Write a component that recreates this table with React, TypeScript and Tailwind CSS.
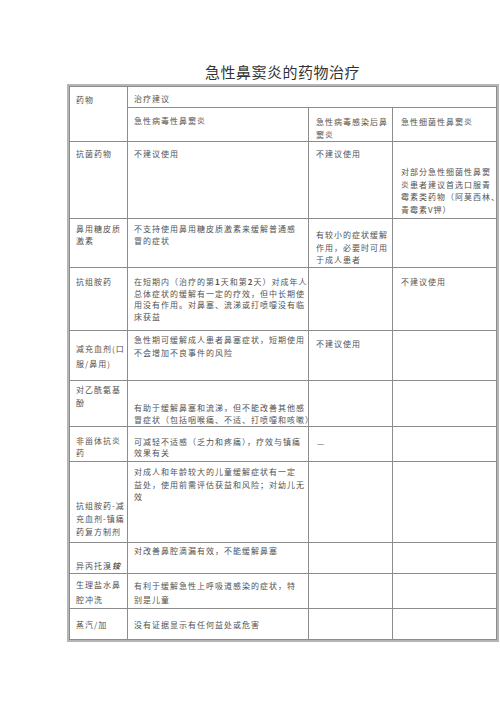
export default function App() {
  const td =
    "align-top border border-[#8c8c8c] p-0 text-[8px] tracking-[1px] text-[#525252] whitespace-nowrap";

  return (
    <div className="min-h-screen bg-white font-['Noto_Sans_CJK_SC','Noto_Sans',sans-serif]">
      <div className="pl-[69px] pt-[62px] w-[496px]">
        {/* 标题 */}
        <h1 className="w-[427px] h-[20px] mb-[4px] text-center text-[15px] leading-[20px] tracking-[0.5px] font-normal text-[#333333]">
          急性鼻窦炎的药物治疗
        </h1>

        <table className="table-fixed border-collapse w-[427px] outline-2 outline-[#b5b5b5]">
          <colgroup>
            <col className="w-[58px]" />
            <col className="w-[181px]" />
            <col className="w-[84px]" />
            <col className="w-[104px]" />
          </colgroup>
          <tbody>
            {/* 表头 */}
            <tr className="h-[21px]">
              <td rowSpan={2} className={`${td} pl-[6px] pt-[7px] leading-[12px]`}>
                药物
              </td>
              <td colSpan={3} className={`${td} pl-[6px] pt-[6px] leading-[12px]`}>
                治疗建议
              </td>
            </tr>
            <tr className="h-[34px]">
              <td className={`${td} pl-[6px] pt-[7px] leading-[12px]`}>急性病毒性鼻窦炎</td>
              <td className={`${td} pl-[7px] pt-[7px] leading-[13px] tracking-[0.9px]`}>
                急性病毒感染后鼻
                <br />
                窦炎
              </td>
              <td className={`${td} pl-[8px] pt-[8px] leading-[12px]`}>急性细菌性鼻窦炎</td>
            </tr>

            {/* 抗菌药物 */}
            <tr className="h-[77px]">
              <td className={`${td} pl-[6px] pt-[6px] leading-[12px]`}>抗菌药物</td>
              <td className={`${td} pl-[6px] pt-[6px] leading-[12px]`}>不建议使用</td>
              <td className={`${td} pl-[7px] pt-[6px] leading-[12px]`}>不建议使用</td>
              <td className={`${td} pl-[8px] pt-[24px] leading-[12.5px] tracking-[0.6px]`}>
                对部分急性细菌性鼻窦
                <br />
                炎患者建议首选口服青
                <br />
                霉素类药物（阿莫西林、
                <br />
                青霉素V钾）
              </td>
            </tr>

            {/* 鼻用糖皮质激素 */}
            <tr className="h-[49px]">
              <td className={`${td} pl-[6px] pt-[4px] leading-[12px]`}>
                鼻用糖皮质
                <br />
                激素
              </td>
              <td className={`${td} pl-[6px] pt-[4px] leading-[12px]`}>
                不支持使用鼻用糖皮质激素来缓解普通感
                <br />
                冒的症状
              </td>
              <td className={`${td} pl-[7px] pt-[10px] leading-[12.5px] tracking-[0.9px]`}>
                有较小的症状缓解
                <br />
                作用，必要时可用
                <br />
                于成人患者
              </td>
              <td className={td}></td>
            </tr>

            {/* 抗组胺药 */}
            <tr className="h-[63px]">
              <td className={`${td} pl-[6px] pt-[8px] leading-[12px]`}>抗组胺药</td>
              <td className={`${td} pl-[6px] pt-[8px] leading-[11.5px] tracking-[0.9px]`}>
                在短期内（治疗的第<b>1</b>天和第<b>2</b>天）对成年人
                <br />
                总体症状的缓解有一定的疗效，但中长期使
                <br />
                用没有作用。对鼻塞、流涕或打喷嚏没有临
                <br />
                床获益
              </td>
              <td className={td}></td>
              <td className={`${td} pl-[8px] pt-[8px] leading-[12px]`}>不建议使用</td>
            </tr>

            {/* 减充血剂 */}
            <tr className="h-[50px]">
              <td className={`${td} pl-[6px] pt-[10px] leading-[15px] tracking-[0.8px]`}>
                减充血剂(口
                <br />
                服/鼻用)
              </td>
              <td className={`${td} pl-[6px] pt-[2px] leading-[13px] tracking-[0.9px]`}>
                急性期可缓解成人患者鼻塞症状，短期使用
                <br />
                不会增加不良事件的风险
              </td>
              <td className={`${td} pl-[7px] pt-[7px] leading-[12px]`}>不建议使用</td>
              <td className={td}></td>
            </tr>

            {/* 对乙酰氨基酚 */}
            <tr className="h-[46px]">
              <td className={`${td} pl-[6px] pt-[2px] leading-[13px]`}>
                对乙酰氨基
                <br />
                酚
              </td>
              <td className={`${td} pl-[6px] pt-[21px] leading-[11.5px] tracking-[0.9px]`}>
                有助于缓解鼻塞和流涕，但不能改善其他感
                <br />
                冒症状（包括咽喉痛、不适、打喷嚏和咳嗽）
              </td>
              <td className={td}></td>
              <td className={td}></td>
            </tr>

            {/* 非甾体抗炎药 */}
            <tr className="h-[35px]">
              <td className={`${td} pl-[6px] pt-[8px] leading-[12px]`}>
                非甾体抗炎
                <br />
                药
              </td>
              <td className={`${td} pl-[6px] pt-[9px] leading-[11px] tracking-[0.9px]`}>
                可减轻不适感（乏力和疼痛），疗效与镇痛
                <br />
                效果有关
              </td>
              <td className={`${td} pl-[8px] pt-[11px] leading-[12px]`}>—</td>
              <td className={td}></td>
            </tr>

            {/* 复方制剂 */}
            <tr className="h-[81px]">
              <td className={`${td} pl-[6px] pt-[37px] leading-[13px] tracking-[0.4px]`}>
                抗组胺药-减
                <br />
                充血剂-镇痛
                <br />
                药复方制剂
              </td>
              <td className={`${td} pl-[6px] pt-[4px] leading-[12.5px] tracking-[0.9px]`}>
                对成人和年龄较大的儿童缓解症状有一定
                <br />
                益处，使用前需评估获益和风险；对幼儿无
                <br />
                效
              </td>
              <td className={td}></td>
              <td className={td}></td>
            </tr>

            {/* 异丙托溴铵 */}
            <tr className="h-[31px]">
              <td className={`${td} pl-[6px] pt-[17px] leading-[12px]`}>
                异丙托溴<i className="font-bold">铵</i>
              </td>
              <td className={`${td} pl-[6px] pt-[2px] leading-[12px]`}>
                对改善鼻腔滴漏有效，不能缓解鼻塞
              </td>
              <td className={td}></td>
              <td className={td}></td>
            </tr>

            {/* 生理盐水 */}
            <tr className="h-[35px]">
              <td className={`${td} pl-[6px] pt-[3px] leading-[15px]`}>
                生理盐水鼻
                <br />
                腔冲洗
              </td>
              <td className={`${td} pl-[6px] pt-[5px] leading-[14px]`}>
                有利于缓解急性上呼吸道感染的症状，特
                <br />
                别是儿童
              </td>
              <td className={td}></td>
              <td className={td}></td>
            </tr>

            {/* 蒸汽/加湿 */}
            <tr className="h-[31px]">
              <td className={`${td} pl-[6px] pt-[10px] leading-[12px]`}>蒸汽/加</td>
              <td className={`${td} pl-[6px] pt-[10px] leading-[12px]`}>
                没有证据显示有任何益处或危害
              </td>
              <td className={td}></td>
              <td className={td}></td>
            </tr>
          </tbody>
        </table>
      </div>
    </div>
  );
}
